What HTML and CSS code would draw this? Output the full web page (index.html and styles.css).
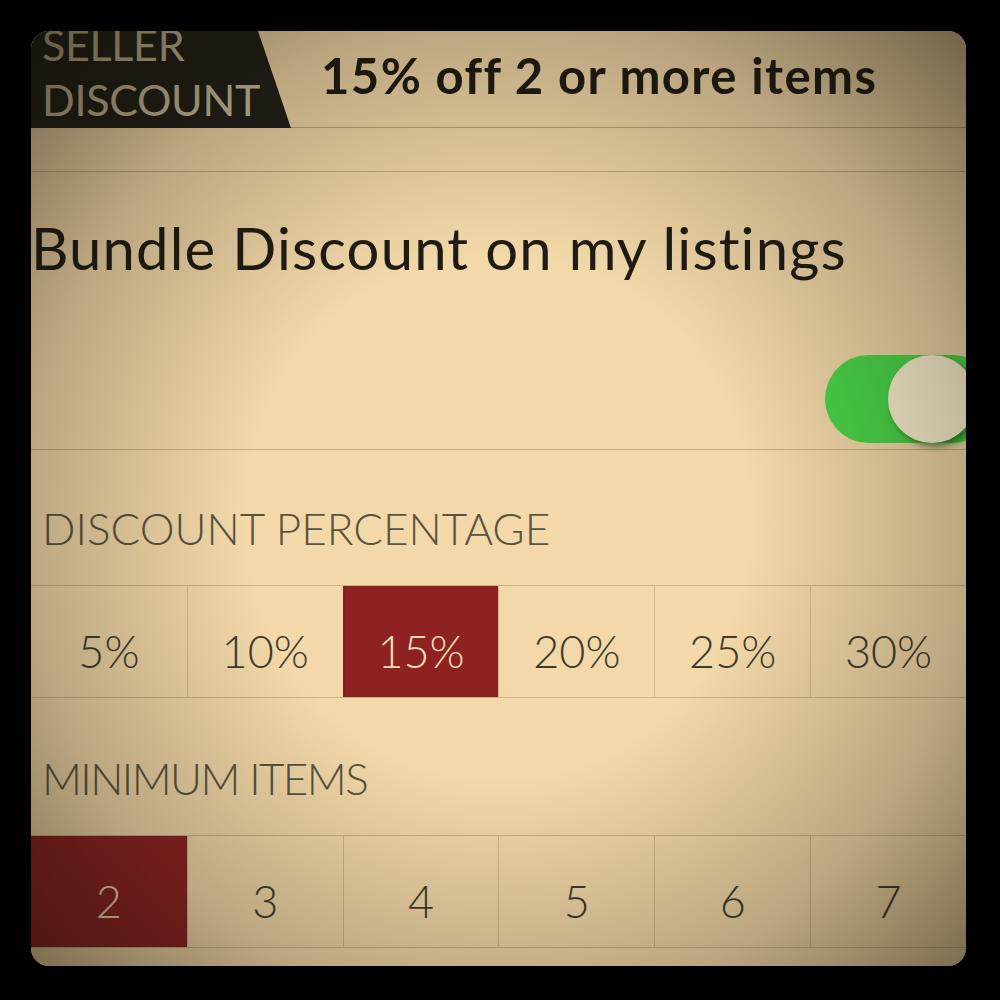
FILE: index.html
```html
<!DOCTYPE html>
<html lang="en">
<head>
<meta charset="utf-8">
<title>Bundle Discount</title>
<link rel="stylesheet" href="styles.css">
</head>
<body>
<div class="panel">
  <header class="header">
    <div class="tab"><span>SELLER</span><span>DISCOUNT</span></div>
    <div class="headline">15% off 2 or more items</div>
  </header>
  <div class="band"></div>
  <section class="bundle">
    <h1 class="title">Bundle Discount on my listings</h1>
    <div class="toggle"><div class="knob"></div></div>
  </section>
  <div class="label">DISCOUNT PERCENTAGE</div>
  <div class="options">
    <div class="opt">5%</div>
    <div class="opt">10%</div>
    <div class="opt sel">15%</div>
    <div class="opt">20%</div>
    <div class="opt">25%</div>
    <div class="opt">30%</div>
  </div>
  <div class="label label2">MINIMUM ITEMS</div>
  <div class="options">
    <div class="opt sel">2</div>
    <div class="opt">3</div>
    <div class="opt">4</div>
    <div class="opt">5</div>
    <div class="opt">6</div>
    <div class="opt">7</div>
  </div>
  <div class="foot"></div>
  <div class="vignette"></div>
</div>
</body>
</html>
```
FILE: styles.css
```css
html, body {
  margin: 0;
  padding: 0;
  background: #000;
}
body {
  padding: 31px 34px 34px 31px;
  font-family: Lato, "Open Sans", sans-serif;
}
.panel {
  position: relative;
  width: 935px;
  height: 935px;
  background: #f3d9a9;
  border-radius: 18px;
  overflow: hidden;
  display: flex;
  flex-direction: column;
}
.header {
  height: 96px;
  border-bottom: 1px solid #b9a57a;
  display: flex;
  flex-shrink: 0;
}
.tab {
  width: 260px;
  height: 97px;
  background: #1f1e17;
  clip-path: polygon(0 0, 227px 0, 260px 100%, 0 100%);
  display: flex;
  flex-direction: column;
  padding-left: 11px;
  box-sizing: border-box;
  color: #cdc1a0;
  font-size: 43px;
  line-height: 55px;
  letter-spacing: -0.3px;
  overflow: hidden;
}
.tab span:first-child {
  margin-top: -14px;
}
.headline {
  padding-top: 15px;
  padding-left: 30px;
  font-size: 49px;
  line-height: 58px;
  font-weight: 700;
  letter-spacing: 1.4px;
  color: #1d1b13;
  white-space: nowrap;
}
.band {
  height: 43px;
  border-bottom: 1px solid #c2ad82;
  flex-shrink: 0;
}
.bundle {
  height: 277px;
  border-bottom: 1px solid #c2ad82;
  display: flex;
  flex-direction: column;
  flex-shrink: 0;
}
.title {
  margin: 0;
  padding: 41px 0 0 0;
  font-size: 58px;
  line-height: 70px;
  font-weight: 400;
  letter-spacing: 1.15px;
  color: #1e1c14;
  white-space: nowrap;
}
.toggle {
  align-self: flex-end;
  margin: 72px -30px 0 0;
  width: 171px;
  height: 88px;
  border-radius: 44px;
  background: #4ad84a;
  display: flex;
}
.knob {
  margin-left: 63px;
  width: 88px;
  height: 88px;
  border-radius: 50%;
  background: #fff3d2;
  box-shadow: 3px 4px 6px rgba(20, 80, 10, 0.6);
}
.label {
  height: 135px;
  box-sizing: border-box;
  padding: 52px 0 0 11px;
  font-size: 44px;
  line-height: 53px;
  font-weight: 300;
  color: #595340;
  flex-shrink: 0;
}
.label2 {
  height: 137px;
  padding-top: 54px;
  letter-spacing: -1.6px;
}
.options {
  height: 111px;
  border-top: 1px solid #c8b488;
  border-bottom: 1px solid #c8b488;
  display: grid;
  grid-template-columns: repeat(6, 1fr);
  flex-shrink: 0;
}
.opt {
  border-left: 1px solid #cdb98c;
  padding-top: 20px;
  line-height: 91px;
  text-align: center;
  font-size: 45px;
  font-weight: 300;
  color: #403b29;
}
.opt:first-child {
  border-left: none;
}
.opt.sel {
  background: #8e2222;
  color: #f3ddb7;
  border-left-color: transparent;
  box-shadow: inset 0 0 0 1px #842020;
}
.foot {
  flex: 1;
}
.vignette {
  position: absolute;
  inset: 0;
  pointer-events: none;
  background: radial-gradient(ellipse farthest-corner at 50% 52%, rgba(20, 14, 4, 0) 38%, rgba(20, 14, 4, 0.25) 72%, rgba(20, 14, 4, 0.58) 100%);
}
```
